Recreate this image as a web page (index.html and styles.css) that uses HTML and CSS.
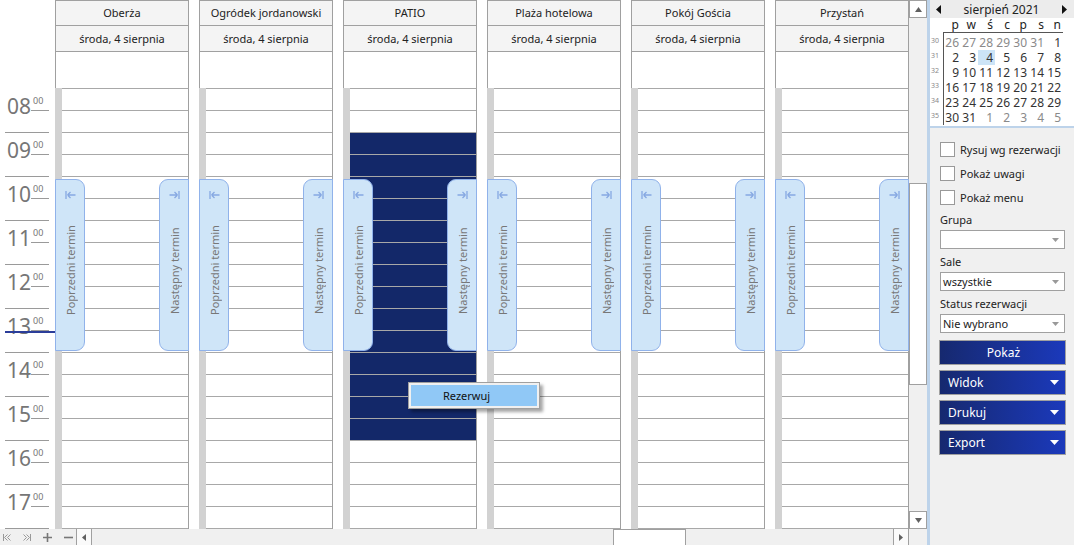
FILE: index.html
```html
<!DOCTYPE html>
<html lang="pl">
<head>
    <meta charset="UTF-8">
    <meta name="viewport" content="width=device-width, initial-scale=1.0">
    <title>Rezerwacje sal</title>
    <link rel="stylesheet" href="styles.css">
</head>
<body>
<div class="app">
    <div class="scheduler">
        <div class="sched-main">
            <div class="grid">
                <!-- Kolumna godzin -->
                <div class="times">
                    <div class="times-head"></div>
                    <div class="hour"><span class="hh">08</span><span class="mm">00</span></div>
                    <div class="hour"><span class="hh">09</span><span class="mm">00</span></div>
                    <div class="hour"><span class="hh">10</span><span class="mm">00</span></div>
                    <div class="hour"><span class="hh">11</span><span class="mm">00</span></div>
                    <div class="hour"><span class="hh">12</span><span class="mm">00</span></div>
                    <div class="hour"><span class="hh">13</span><span class="mm">00</span></div>
                    <div class="hour"><span class="hh">14</span><span class="mm">00</span></div>
                    <div class="hour"><span class="hh">15</span><span class="mm">00</span></div>
                    <div class="hour"><span class="hh">16</span><span class="mm">00</span></div>
                    <div class="hour"><span class="hh">17</span><span class="mm">00</span></div>
                    <div class="now-line"></div>
                </div>

                <!-- Sale -->
                <div class="col">
                    <div class="col-head">Oberża</div>
                    <div class="col-date">środa, 4 sierpnia</div>
                    <div class="col-allday"></div>
                    <div class="col-body">
                        <div class="strip"></div>
                        <div class="cells"></div>
                        <div class="tab tab-prev"><svg width="11" height="8" viewBox="0 0 11 8"><path d="M1 0V8M2.5 4H10.5M2.5 4L5.5 1M2.5 4L5.5 7" stroke="#86a8e2" stroke-width="1.3" fill="none"/></svg><span>Poprzedni termin</span></div>
                        <div class="tab tab-next"><svg width="11" height="8" viewBox="0 0 11 8"><path d="M10 0V8M0.5 4H8.5M8.5 4L5.5 1M8.5 4L5.5 7" stroke="#86a8e2" stroke-width="1.3" fill="none"/></svg><span>Następny termin</span></div>
                    </div>
                </div>
                <div class="col">
                    <div class="col-head">Ogródek jordanowski</div>
                    <div class="col-date">środa, 4 sierpnia</div>
                    <div class="col-allday"></div>
                    <div class="col-body">
                        <div class="strip"></div>
                        <div class="cells"></div>
                        <div class="tab tab-prev"><svg width="11" height="8" viewBox="0 0 11 8"><path d="M1 0V8M2.5 4H10.5M2.5 4L5.5 1M2.5 4L5.5 7" stroke="#86a8e2" stroke-width="1.3" fill="none"/></svg><span>Poprzedni termin</span></div>
                        <div class="tab tab-next"><svg width="11" height="8" viewBox="0 0 11 8"><path d="M10 0V8M0.5 4H8.5M8.5 4L5.5 1M8.5 4L5.5 7" stroke="#86a8e2" stroke-width="1.3" fill="none"/></svg><span>Następny termin</span></div>
                    </div>
                </div>
                <div class="col">
                    <div class="col-head">PATIO</div>
                    <div class="col-date">środa, 4 sierpnia</div>
                    <div class="col-allday"></div>
                    <div class="col-body">
                        <div class="strip"></div>
                        <div class="cells"><div class="sel"></div></div>
                        <div class="tab tab-prev"><svg width="11" height="8" viewBox="0 0 11 8"><path d="M1 0V8M2.5 4H10.5M2.5 4L5.5 1M2.5 4L5.5 7" stroke="#86a8e2" stroke-width="1.3" fill="none"/></svg><span>Poprzedni termin</span></div>
                        <div class="tab tab-next"><svg width="11" height="8" viewBox="0 0 11 8"><path d="M10 0V8M0.5 4H8.5M8.5 4L5.5 1M8.5 4L5.5 7" stroke="#86a8e2" stroke-width="1.3" fill="none"/></svg><span>Następny termin</span></div>
                    </div>
                </div>
                <div class="col">
                    <div class="col-head">Plaża hotelowa</div>
                    <div class="col-date">środa, 4 sierpnia</div>
                    <div class="col-allday"></div>
                    <div class="col-body">
                        <div class="strip"></div>
                        <div class="cells"></div>
                        <div class="tab tab-prev"><svg width="11" height="8" viewBox="0 0 11 8"><path d="M1 0V8M2.5 4H10.5M2.5 4L5.5 1M2.5 4L5.5 7" stroke="#86a8e2" stroke-width="1.3" fill="none"/></svg><span>Poprzedni termin</span></div>
                        <div class="tab tab-next"><svg width="11" height="8" viewBox="0 0 11 8"><path d="M10 0V8M0.5 4H8.5M8.5 4L5.5 1M8.5 4L5.5 7" stroke="#86a8e2" stroke-width="1.3" fill="none"/></svg><span>Następny termin</span></div>
                    </div>
                </div>
                <div class="col">
                    <div class="col-head">Pokój Gościa</div>
                    <div class="col-date">środa, 4 sierpnia</div>
                    <div class="col-allday"></div>
                    <div class="col-body">
                        <div class="strip"></div>
                        <div class="cells"></div>
                        <div class="tab tab-prev"><svg width="11" height="8" viewBox="0 0 11 8"><path d="M1 0V8M2.5 4H10.5M2.5 4L5.5 1M2.5 4L5.5 7" stroke="#86a8e2" stroke-width="1.3" fill="none"/></svg><span>Poprzedni termin</span></div>
                        <div class="tab tab-next"><svg width="11" height="8" viewBox="0 0 11 8"><path d="M10 0V8M0.5 4H8.5M8.5 4L5.5 1M8.5 4L5.5 7" stroke="#86a8e2" stroke-width="1.3" fill="none"/></svg><span>Następny termin</span></div>
                    </div>
                </div>
                <div class="col">
                    <div class="col-head">Przystań</div>
                    <div class="col-date">środa, 4 sierpnia</div>
                    <div class="col-allday"></div>
                    <div class="col-body">
                        <div class="strip"></div>
                        <div class="cells"></div>
                        <div class="tab tab-prev"><svg width="11" height="8" viewBox="0 0 11 8"><path d="M1 0V8M2.5 4H10.5M2.5 4L5.5 1M2.5 4L5.5 7" stroke="#86a8e2" stroke-width="1.3" fill="none"/></svg><span>Poprzedni termin</span></div>
                        <div class="tab tab-next"><svg width="11" height="8" viewBox="0 0 11 8"><path d="M10 0V8M0.5 4H8.5M8.5 4L5.5 1M8.5 4L5.5 7" stroke="#86a8e2" stroke-width="1.3" fill="none"/></svg><span>Następny termin</span></div>
                    </div>
                </div>
            </div>

            <!-- Pionowy pasek przewijania -->
            <div class="vscroll">
                <div class="sb-btn"><svg width="7" height="5"><path d="M0 5L3.5 0L7 5Z" fill="#606060"/></svg></div>
                <div class="sb-track-v"><div class="sb-thumb-v"></div></div>
                <div class="sb-btn"><svg width="7" height="5"><path d="M0 0L3.5 5L7 0Z" fill="#606060"/></svg></div>
            </div>
        </div>

        <div class="bottom-bar">
            <div class="nav-icons">
                <svg width="8" height="7"><path d="M0.5 0V7" stroke="#999"/><path d="M4.5 0.5L1.5 3.5L4.5 6.5M7.5 0.5L4.5 3.5L7.5 6.5" stroke="#999" fill="none"/></svg>
                <svg width="8" height="7"><path d="M7.5 0V7" stroke="#999"/><path d="M0.5 0.5L3.5 3.5L0.5 6.5M3.5 0.5L6.5 3.5L3.5 6.5" stroke="#999" fill="none"/></svg>
                <svg width="9" height="9"><path d="M0 4.5H9M4.5 0V9" stroke="#777" stroke-width="1.6"/></svg>
                <svg width="9" height="9"><path d="M0 4.5H9" stroke="#777" stroke-width="1.6"/></svg>
            </div>
            <div class="hscroll">
                <div class="sb-btn-h"><svg width="4" height="7"><path d="M4 0L0 3.5L4 7Z" fill="#606060"/></svg></div>
                <div class="sb-track-h"><div class="sb-thumb-h"></div></div>
                <div class="sb-btn-h"><svg width="4" height="7"><path d="M0 0L4 3.5L0 7Z" fill="#606060"/></svg></div>
            </div>
            <div class="corner"></div>
        </div>
    </div>

    <!-- Panel boczny -->
    <div class="panel">
        <div class="cal">
            <div class="cal-head">
                <svg width="5" height="9"><path d="M5 0L0 4.5L5 9Z" fill="#111"/></svg>
                <span>sierpień 2021</span>
                <svg width="5" height="9"><path d="M0 0L5 4.5L0 9Z" fill="#111"/></svg>
            </div>
            <div class="cal-dow">
                <span>p</span><span>w</span><span>ś</span><span>c</span><span>p</span><span>s</span><span>n</span>
            </div>
            <div class="cal-body">
                <div class="weeks">
                    <span>30</span><span>31</span><span>32</span><span>33</span><span>34</span><span>35</span>
                </div>
                <div class="days">
                    <span class="other">26</span><span class="other">27</span><span class="other">28</span><span class="other">29</span><span class="other">30</span><span class="other">31</span><span>1</span>
                    <span>2</span><span>3</span><span class="today">4</span><span>5</span><span>6</span><span>7</span><span>8</span>
                    <span>9</span><span>10</span><span>11</span><span>12</span><span>13</span><span>14</span><span>15</span>
                    <span>16</span><span>17</span><span>18</span><span>19</span><span>20</span><span>21</span><span>22</span>
                    <span>23</span><span>24</span><span>25</span><span>26</span><span>27</span><span>28</span><span>29</span>
                    <span>30</span><span>31</span><span class="other">1</span><span class="other">2</span><span class="other">3</span><span class="other">4</span><span class="other">5</span>
                </div>
            </div>
        </div>

        <div class="opts">
            <label class="check"><span class="box"></span>Rysuj wg rezerwacji</label>
            <label class="check"><span class="box"></span>Pokaż uwagi</label>
            <label class="check"><span class="box"></span>Pokaż menu</label>

            <div class="field">
                <div class="field-label">Grupa</div>
                <div class="select"><span></span><svg width="7" height="4"><path d="M0 0L3.5 4L7 0Z" fill="#999"/></svg></div>
            </div>
            <div class="field">
                <div class="field-label">Sale</div>
                <div class="select"><span>wszystkie</span><svg width="7" height="4"><path d="M0 0L3.5 4L7 0Z" fill="#999"/></svg></div>
            </div>
            <div class="field">
                <div class="field-label">Status rezerwacji</div>
                <div class="select"><span>Nie wybrano</span><svg width="7" height="4"><path d="M0 0L3.5 4L7 0Z" fill="#999"/></svg></div>
            </div>

            <div class="btn btn-center">Pokaż</div>
            <div class="btn">Widok<svg width="9" height="5"><path d="M0 0L4.5 5L9 0Z" fill="#fff"/></svg></div>
            <div class="btn">Drukuj<svg width="9" height="5"><path d="M0 0L4.5 5L9 0Z" fill="#fff"/></svg></div>
            <div class="btn">Export<svg width="9" height="5"><path d="M0 0L4.5 5L9 0Z" fill="#fff"/></svg></div>
        </div>
    </div>

    <!-- Menu kontekstowe -->
    <div class="ctx-menu"><div class="ctx-item">Rezerwuj</div></div>
</div>
</body>
</html>
```

FILE: styles.css
```css
* {
    box-sizing: border-box;
}
body {
    margin: 0;
    font-family: "Noto Sans", "DejaVu Sans", sans-serif;
    font-size: 11px;
    color: #222;
    background-color: #fff;
}
.app {
    position: relative;
    display: flex;
    width: 1074px;
    height: 545px;
    overflow: hidden;
}
.scheduler {
    width: 927px;
    display: flex;
    flex-direction: column;
}
.sched-main {
    display: flex;
    height: 529px;
}
.grid {
    width: 909px;
    display: flex;
    overflow: hidden;
}

/* Kolumna godzin */
.times {
    position: relative;
    flex: 0 0 55px;
}
.times-head {
    height: 89px;
}
.hour {
    width: 44px;
    height: 44px;
    margin-left: 5px;
    padding-top: 7px;
    display: flex;
    align-items: flex-start;
    border-bottom: 1px solid #9a9a9a;
    color: #767676;
}
.hh {
    width: 26px;
    padding-left: 2px;
    font-size: 21px;
    line-height: 21px;
}
.mm {
    flex: 1;
    height: 15px;
    padding-left: 2px;
    font-size: 9px;
    line-height: 9px;
    border-bottom: 1px solid #9a9a9a;
}
.now-line {
    position: absolute;
    left: 5px;
    top: 331px;
    width: 50px;
    height: 2px;
    background-color: #2b3d99;
}

/* Kolumny sal */
.col {
    flex: 0 0 134px;
    margin-right: 10px;
    display: flex;
    flex-direction: column;
}
.col-head, .col-date {
    height: 26px;
    border: 1px solid #a0a0a0;
    background-color: #f4f4f4;
    text-align: center;
    line-height: 24px;
    white-space: nowrap;
}
.col-date {
    border-top: none;
    line-height: 25px;
}
.col-allday {
    height: 36px;
    border-left: 1px solid #a0a0a0;
    border-right: 1px solid #a0a0a0;
}
.col-body {
    position: relative;
    flex: 1;
    display: flex;
}
.strip {
    width: 7px;
    background-color: #d2d2d2;
}
.cells {
    flex: 1;
    border-top: 1px solid #a8a8a8;
    border-right: 1px solid #a0a0a0;
    background: repeating-linear-gradient(#fff 0 21px, #a8a8a8 21px 22px);
}
.sel {
    margin-top: 44px;
    height: 308px;
    background: repeating-linear-gradient(#132869 0 21px, #a8a8a8 21px 22px);
}
.tab {
    position: absolute;
    top: 91px;
    width: 30px;
    height: 172px;
    padding-bottom: 8px;
    display: flex;
    flex-direction: column;
    align-items: center;
    background-color: #cfe5f8;
    border: 1px solid #90b2ea;
    color: #777;
}
.tab-prev {
    left: 0;
    border-radius: 0 9px 9px 0;
}
.tab-next {
    right: 0;
    border-radius: 9px 0 0 9px;
}
.tab svg {
    flex: none;
    margin-top: 11px;
}
.tab span {
    flex: 1;
    writing-mode: vertical-rl;
    transform: rotate(180deg);
    text-align: center;
    white-space: nowrap;
}

/* Paski przewijania */
.vscroll {
    width: 18px;
    display: flex;
    flex-direction: column;
    background-color: #f0f0f0;
}
.sb-btn {
    height: 18px;
    display: flex;
    align-items: center;
    justify-content: center;
    background-color: #fff;
    border: 1px solid #a0a0a0;
}
.sb-track-v {
    flex: 1;
    padding-top: 165px;
}
.sb-thumb-v {
    height: 202px;
    background-color: #fff;
    border: 1px solid #a0a0a0;
}
.bottom-bar {
    flex: 1;
    display: flex;
    background-color: #f0f0f0;
}
.nav-icons {
    width: 76px;
    display: flex;
    align-items: center;
    gap: 12px;
    padding-left: 3px;
}
.hscroll {
    width: 833px;
    display: flex;
}
.sb-btn-h {
    width: 16px;
    display: flex;
    align-items: center;
    justify-content: center;
    background-color: #fafafa;
    border-left: 1px solid #a0a0a0;
    border-right: 1px solid #a0a0a0;
}
.sb-track-h {
    flex: 1;
    padding-left: 521px;
}
.sb-thumb-h {
    width: 73px;
    height: 100%;
    background-color: #fff;
    border: 1px solid #a0a0a0;
    border-bottom: none;
}
.corner {
    flex: 1;
}

/* Panel boczny */
.panel {
    flex: 1;
    border-left: 3px solid #bdd3ea;
    background-color: #f0f0f0;
}
.cal {
    height: 126px;
    background-color: #fff;
}
.cal-head {
    height: 18px;
    padding: 0 7px 0 6px;
    display: flex;
    align-items: center;
    justify-content: space-between;
    background-color: #ececec;
    font-size: 12px;
}
.cal-dow, .days {
    display: grid;
    grid-template-columns: repeat(7, 17px);
    text-align: right;
}
.cal-dow span, .days span {
    padding-right: 2px;
}
.cal-dow {
    height: 14px;
    margin-left: 14px;
    line-height: 14px;
    font-size: 12px;
}
.cal-body {
    display: flex;
}
.weeks {
    width: 13px;
    padding-top: 3px;
    display: flex;
    flex-direction: column;
    font-size: 7px;
    color: #888;
}
.weeks span {
    height: 15px;
    line-height: 12px;
    padding-left: 1px;
}
.days {
    padding-top: 2px;
    border-left: 1px solid #555;
    border-top: 1px solid #555;
    grid-auto-rows: 15px;
    line-height: 15px;
    font-size: 12px;
    color: #333;
}
.days .other {
    color: #8a8a8a;
}
.days .today {
    background-color: #cce4f7;
}
.opts {
    border-top: 2px solid #bdd3ea;
    padding: 14px 0 0 10px;
    display: flex;
    flex-direction: column;
}
.check {
    height: 15px;
    margin-bottom: 9px;
    display: flex;
    align-items: center;
    gap: 5px;
}
.box {
    width: 15px;
    height: 15px;
    background-color: #fff;
    border: 1px solid #999;
}
.field {
    width: 125px;
    margin-bottom: 5px;
}
.field:first-of-type {
    margin-top: -2px;
}
.field-label {
    height: 16px;
    line-height: 16px;
    margin-bottom: 2px;
}
.select {
    height: 19px;
    padding: 0 5px 0 2px;
    display: flex;
    align-items: center;
    justify-content: space-between;
    background-color: #fff;
    border: 1px solid #a0a0a0;
}
.btn {
    width: 127px;
    height: 25px;
    margin: 0 0 5px -1px;
    padding: 0 6px 0 8px;
    display: flex;
    align-items: center;
    justify-content: space-between;
    background: linear-gradient(to right, #16296f, #1b39bb);
    border: 1px solid #a0a0a0;
    color: #fff;
    font-size: 12px;
}
.btn-center {
    margin-top: 2px;
    justify-content: center;
}

/* Menu kontekstowe */
.ctx-menu {
    position: absolute;
    left: 408px;
    top: 382px;
    width: 132px;
    height: 27px;
    padding: 2px;
    background-color: #f0f0f0;
    border: 1px solid #a0a0a0;
    box-shadow: 3px 3px 3px rgba(0, 0, 0, 0.35);
}
.ctx-item {
    height: 21px;
    padding-left: 32px;
    line-height: 21px;
    background-color: #90c8f6;
    color: #111;
}
```
